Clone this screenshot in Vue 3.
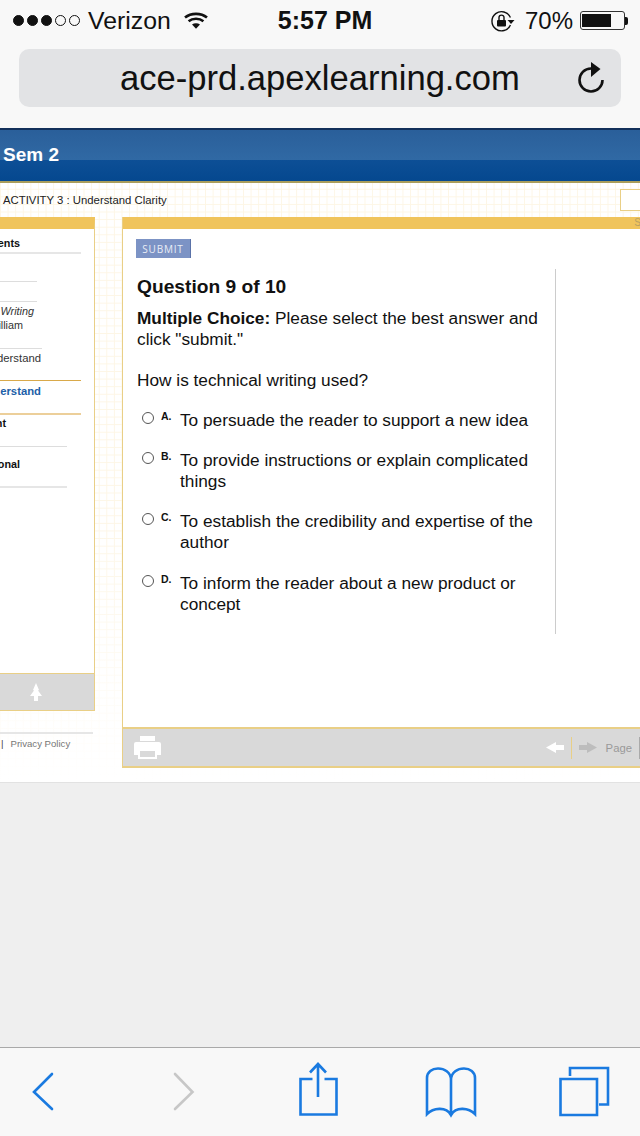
<template>
  <div class="phone">
    <header class="chrome">
      <div class="status">
        <div class="status-left">
          <span class="signal">
            <i v-for="dot in signalDots" :key="dot.id" class="dot" :class="{ on: dot.on }"></i>
          </span>
          <span class="carrier">Verizon</span>
          <svg class="wifi" width="24" height="17" viewBox="0 0 24 17">
            <path d="M1 5.6C7 .6 17 .6 23 5.6" fill="none" stroke="#111" stroke-width="2.6" />
            <path d="M4.6 9.2C8.6 6 15.4 6 19.4 9.2" fill="none" stroke="#111" stroke-width="2.6" />
            <path d="M8 12.4C10.2 10.8 13.8 10.8 16 12.4L12 16.8Z" fill="#111" />
          </svg>
        </div>
        <div class="clock">5:57 PM</div>
        <div class="status-right">
          <svg class="lock" width="24" height="22" viewBox="0 0 24 22">
            <path d="M19.4 7.5A9.6 9.6 0 1 0 19.4 15" fill="none" stroke="#111" stroke-width="1.4" />
            <path d="M16.5 10H23.5L20 14Z" fill="#111" />
            <rect x="6" y="10" width="9" height="6.5" rx="1" fill="#111" />
            <path d="M8 10V7.6A2.5 2.5 0 0 1 13 7.6V10" fill="none" stroke="#111" stroke-width="1.4" />
          </svg>
          <span class="percent">70%</span>
          <span class="battery"><span class="battery-fill" :style="{ width: batteryLevel + '%' }"></span></span>
          <span class="battery-tip"></span>
        </div>
      </div>
      <div class="urlbar">
        <span class="url">ace-prd.apexlearning.com</span>
        <svg class="reload" width="30" height="34" viewBox="0 0 30 34">
          <path d="M15 7.5A11.5 11.5 0 1 0 26.5 19" fill="none" stroke="#111" stroke-width="2.6" />
          <path d="M15 1L24.5 8L15 16Z" fill="#111" />
        </svg>
      </div>
    </header>

    <main class="web">
      <div class="banner">Sem 2</div>
      <div class="crumbs">
        <span>ACTIVITY 3 : Understand Clarity</span>
        <span class="crumb-box"></span>
      </div>

      <div class="columns">
        <div class="side">
          <aside class="side-panel">
            <div class="side-list">
              <div class="item contents">Contents</div>
              <div class="item rule blank-a"></div>
              <div class="item rule blank-b"></div>
              <div class="item rule writing">
                <em class="writing-title">Technical Writing</em>
                <span class="writing-by">by William</span>
              </div>
              <div class="item plain">Understand</div>
              <div class="item current">Understand</div>
              <div class="item bold assess">Assessment</div>
              <div class="item bold optional">Optional</div>
            </div>
            <div class="side-foot">
              <svg width="12" height="18" viewBox="0 0 12 18">
                <path d="M6 0L9 7L8 7.5L12 13H8V18H4V13H0L4 7.5L3 7Z" fill="#fff" />
              </svg>
            </div>
          </aside>
          <div class="legal"><span class="bar">|</span>Privacy Policy</div>
        </div>

        <section class="panel">
          <div class="panel-top">S</div>
          <div class="panel-body">
            <button class="submit" type="button">SUBMIT</button>
            <div class="question">
              <h1>Question 9 of 10</h1>
              <p class="lead"><b>Multiple Choice:</b> Please select the best answer and click "submit."</p>
              <p class="ask">How is technical writing used?</p>
              <div v-for="option in options" :key="option.letter" class="option">
                <span class="radio"></span>
                <span class="letter">{{ option.letter }}.</span>
                <span class="answer">{{ option.text }}</span>
              </div>
            </div>
          </div>
          <div class="panel-foot">
            <svg width="27" height="23" viewBox="0 0 27 23">
              <path fill="#fff" fill-rule="evenodd" d="M6 0H21V5H6ZM2 6H25Q27 6 27 8V19H23V23H4V19H0V8Q0 6 2 6ZM6 15V21H21V15Z" />
            </svg>
            <div class="pager">
              <svg width="18" height="11" viewBox="0 0 18 11"><path d="M0 5.5L10 0V3H18V8H10V11Z" fill="#fff" /></svg>
              <span class="pager-rule"></span>
              <svg width="18" height="11" viewBox="0 0 18 11"><path d="M18 5.5L8 0V3H0V8H8V11Z" fill="#bdbdbd" /></svg>
              <span class="page-label">Page</span>
              <span class="page-rule"></span>
            </div>
          </div>
        </section>
      </div>
    </main>

    <div class="overscroll"></div>

    <footer class="toolbar">
      <svg width="640" height="88" viewBox="0 0 640 88" fill="none" stroke="#1a7ae0" stroke-width="2.6">
        <path d="M52 26L34 44L52 61" stroke-linecap="round" />
        <path d="M175 26L192.5 44L175 61" stroke="#c7c7c7" stroke-linecap="round" />
        <path d="M312.5 31H300.5V66.5H336.5V31H324.5M318 16V49M310 24.5L318 16L326 24.5" />
        <path d="M451 32C451 24 444 20.5 438 20.5C432 20.5 427 24 427 30V66C433 60 446 58 451 67C456 58 469 60 475 66V30C475 24 470 20.5 464 20.5C458 20.5 451 24 451 32V67" />
        <path d="M560.5 31H597V67H560.5ZM570 28V20H608V56.5H599" />
      </svg>
    </footer>
  </div>
</template>

<script setup>
const signalDots = [
  { id: 1, on: true },
  { id: 2, on: true },
  { id: 3, on: true },
  { id: 4, on: false },
  { id: 5, on: false },
]

const batteryLevel = 70

const options = [
  { letter: 'A', text: 'To persuade the reader to support a new idea' },
  { letter: 'B', text: 'To provide instructions or explain complicated things' },
  { letter: 'C', text: 'To establish the credibility and expertise of the author' },
  { letter: 'D', text: 'To inform the reader about a new product or concept' },
]
</script>

<style>
html,
body {
  margin: 0;
  background: #efefef;
}
</style>

<style scoped>
.phone {
  width: 640px;
  height: 1136px;
  display: flex;
  flex-direction: column;
  overflow: hidden;
  background: #efefef;
  font-family: "Liberation Sans", Arial, sans-serif;
  color: #111;
}

.chrome {
  height: 128px;
  flex: none;
  background: #f8f8f8;
  padding: 0 19px;
  box-sizing: border-box;
}

.status {
  height: 41px;
  margin: 0 -7px 0 -6px;
  display: grid;
  grid-template-columns: 1fr auto 1fr;
  align-items: center;
  font-size: 24.8px;
}

.status-left,
.status-right {
  display: flex;
  align-items: center;
}

.status-right {
  justify-content: flex-end;
}

.signal {
  display: flex;
  gap: 3px;
  margin-right: 8px;
}

.dot {
  width: 11px;
  height: 11px;
  border: 1px solid #111;
  border-radius: 50%;
  box-sizing: border-box;
}

.dot.on {
  background: #111;
}

.carrier {
  margin-right: 13px;
}

.clock {
  font-weight: 700;
  font-size: 25px;
  margin-left: 9px;
}

.lock {
  margin-right: 10px;
}

.percent {
  margin-right: 7px;
  font-size: 24px;
}

.battery {
  width: 45px;
  height: 19px;
  border: 1px solid #333;
  border-radius: 3px;
  padding: 2px 1px;
  box-sizing: border-box;
  display: block;
}

.battery-fill {
  display: block;
  height: 100%;
  background: #111;
}

.battery-tip {
  width: 3px;
  height: 8px;
  background: #111;
  border-radius: 0 2px 2px 0;
}

.urlbar {
  height: 58px;
  margin-top: 8px;
  background: #e2e3e5;
  border-radius: 10px;
  display: flex;
  align-items: center;
  justify-content: space-between;
  padding: 0 15px 0 101px;
}

.url {
  font-size: 34.6px;
  white-space: nowrap;
}

.web {
  height: 655px;
  flex: none;
  box-sizing: border-box;
  border-bottom: 1px solid #e2e2e2;
  overflow: hidden;
  background-color: #fff;
  background-image:
    linear-gradient(rgba(255, 255, 255, 0) 60%, #fff 100%),
    linear-gradient(#fdf6e6 1px, transparent 1px),
    linear-gradient(90deg, #fdf6e6 1px, transparent 1px);
  background-size: 100% 100%, 7.6px 7.6px, 7.6px 7.6px;
}

.banner {
  height: 55px;
  box-sizing: border-box;
  border-top: 2px solid #12305a;
  border-bottom: 2px solid #a99d5a;
  background: linear-gradient(#2a5f9a 0, #3069a4 58%, #0d4f96 58%, #05488f 100%);
  padding: 14px 0 0 3px;
  color: #fff;
  font-weight: 700;
  font-size: 19px;
  line-height: 22px;
}

.crumbs {
  height: 34px;
  display: flex;
  align-items: center;
  justify-content: space-between;
  padding-left: 3px;
  font-size: 11.35px;
  color: #222;
}

.crumb-box {
  width: 32px;
  height: 22px;
  box-sizing: border-box;
  margin-right: -12px;
  background: #fff;
  border: 1px solid #e9cf86;
}

.columns {
  display: flex;
  align-items: flex-start;
  gap: 27px;
}

.side {
  width: 95px;
  flex: none;
}

.side-panel {
  width: 196px;
  height: 494px;
  margin-left: -101px;
  box-sizing: border-box;
  border: 1px solid #e9cf86;
  border-top: 12px solid #f0c45c;
  background: #fff;
  display: flex;
  flex-direction: column;
}

.side-list {
  flex: 1;
  overflow: hidden;
  font-size: 10.8px;
  line-height: 14px;
}

.item {
  box-sizing: border-box;
  text-align: right;
  white-space: nowrap;
}

.rule {
  width: 137px;
  border-bottom: 1px solid #ddd;
}

.contents {
  width: 181px;
  height: 25px;
  padding: 7px 61px 0 0;
  font-weight: 700;
  border-bottom: 2px solid #e6e6e6;
}

.blank-a {
  height: 28px;
}

.blank-b {
  height: 20px;
}

.writing {
  width: 142px;
  height: 47px;
  padding-top: 2px;
}

.writing-title,
.writing-by {
  display: block;
  color: #333;
}

.writing-title {
  padding-right: 8px;
}

.writing-by {
  padding-right: 19px;
}

.plain {
  width: 181px;
  height: 32px;
  padding: 2px 40px 0 0;
  color: #333;
  font-size: 11.3px;
  border-bottom: 1px solid #d9a94a;
}

.current {
  width: 181px;
  height: 34px;
  padding: 3px 40px 0 0;
  border-bottom: 2px solid #eccf9a;
  color: #1d5fa8;
  font-size: 11.3px;
  font-weight: 700;
}

.bold {
  font-weight: 700;
}

.assess {
  width: 167px;
  height: 32px;
  padding: 1px 61px 0 0;
  border-bottom: 1px solid #ddd;
}

.optional {
  width: 167px;
  height: 41px;
  padding: 10px 47px 0 0;
  border-bottom: 2px solid #e6e6e6;
}

.side-foot {
  height: 36px;
  background: #d9d9d9;
  border-top: 1px solid #e9cf86;
  display: flex;
  align-items: center;
  padding-left: 130px;
}

.legal {
  width: 93px;
  margin-top: 21px;
  border-top: 2px solid #e6e6e6;
  padding-top: 4px;
  font-size: 9.6px;
  line-height: 12px;
  color: #777;
  white-space: nowrap;
}

.bar {
  color: #444;
  margin: 0 7px 0 1px;
}

.panel {
  width: 530px;
  flex: none;
  box-sizing: border-box;
  border-left: 1px solid #e9cf86;
  background: #fff;
}

.panel-top {
  height: 12px;
  padding-right: 11px;
  background: #f0c45c;
  color: #b9a163;
  font-size: 10px;
  line-height: 12px;
  text-align: right;
}

.panel-body {
  height: 498px;
  box-sizing: border-box;
  padding: 10px 0 0 13px;
}

.submit {
  display: block;
  width: 55px;
  height: 19px;
  padding: 0;
  border: 0;
  border-right: 1px solid #5a72a8;
  background: #7c93c5;
  color: #e9edf6;
  font-family: "Open Sans", sans-serif;
  font-size: 10px;
  letter-spacing: 0.8px;
}

.question {
  width: 420px;
  height: 365px;
  margin-top: 11px;
  box-sizing: border-box;
  padding: 6px 0 0 1px;
  border-right: 1px solid #ccc;
}

h1 {
  margin: 0;
  font-size: 19.2px;
  line-height: 24px;
}

.lead {
  margin: 9px 0 0;
  width: 408px;
  font-size: 17.26px;
  line-height: 21px;
}

.ask {
  margin: 20px 0 0;
  font-size: 17.26px;
  line-height: 21px;
}

.option {
  display: flex;
  align-items: flex-start;
  margin: 19.17px 0 0 5px;
  font-size: 17.26px;
  line-height: 21px;
  width: 395px;
}

.radio {
  width: 12px;
  height: 12px;
  flex: none;
  margin-top: 2px;
  box-sizing: border-box;
  border: 1.5px solid #555;
  border-radius: 50%;
}

.letter {
  width: 19px;
  flex: none;
  margin-left: 7px;
  font-size: 10.5px;
  line-height: 12px;
  font-weight: 700;
}

.panel-foot {
  height: 41px;
  box-sizing: border-box;
  background: #d9d9d9;
  border-top: 2px solid #e9cf86;
  border-bottom: 2px solid #e9cf86;
  display: flex;
  align-items: center;
  justify-content: space-between;
  padding: 0 12px 0 11px;
}

.pager {
  display: flex;
  align-items: center;
  gap: 7px;
  color: #999;
  font-size: 11.3px;
}

.pager-rule {
  width: 1px;
  height: 22px;
  background: #e9cf86;
}

.page-label {
  margin-left: 2px;
}

.page-rule {
  width: 1px;
  height: 22px;
  background: #aaa;
}

.overscroll {
  flex: 1;
  background: #efefef;
}

.toolbar {
  height: 89px;
  flex: none;
  box-sizing: border-box;
  background: #f8f8f8;
  border-top: 1px solid #a9a9a9;
}

.toolbar svg {
  display: block;
}
</style>
